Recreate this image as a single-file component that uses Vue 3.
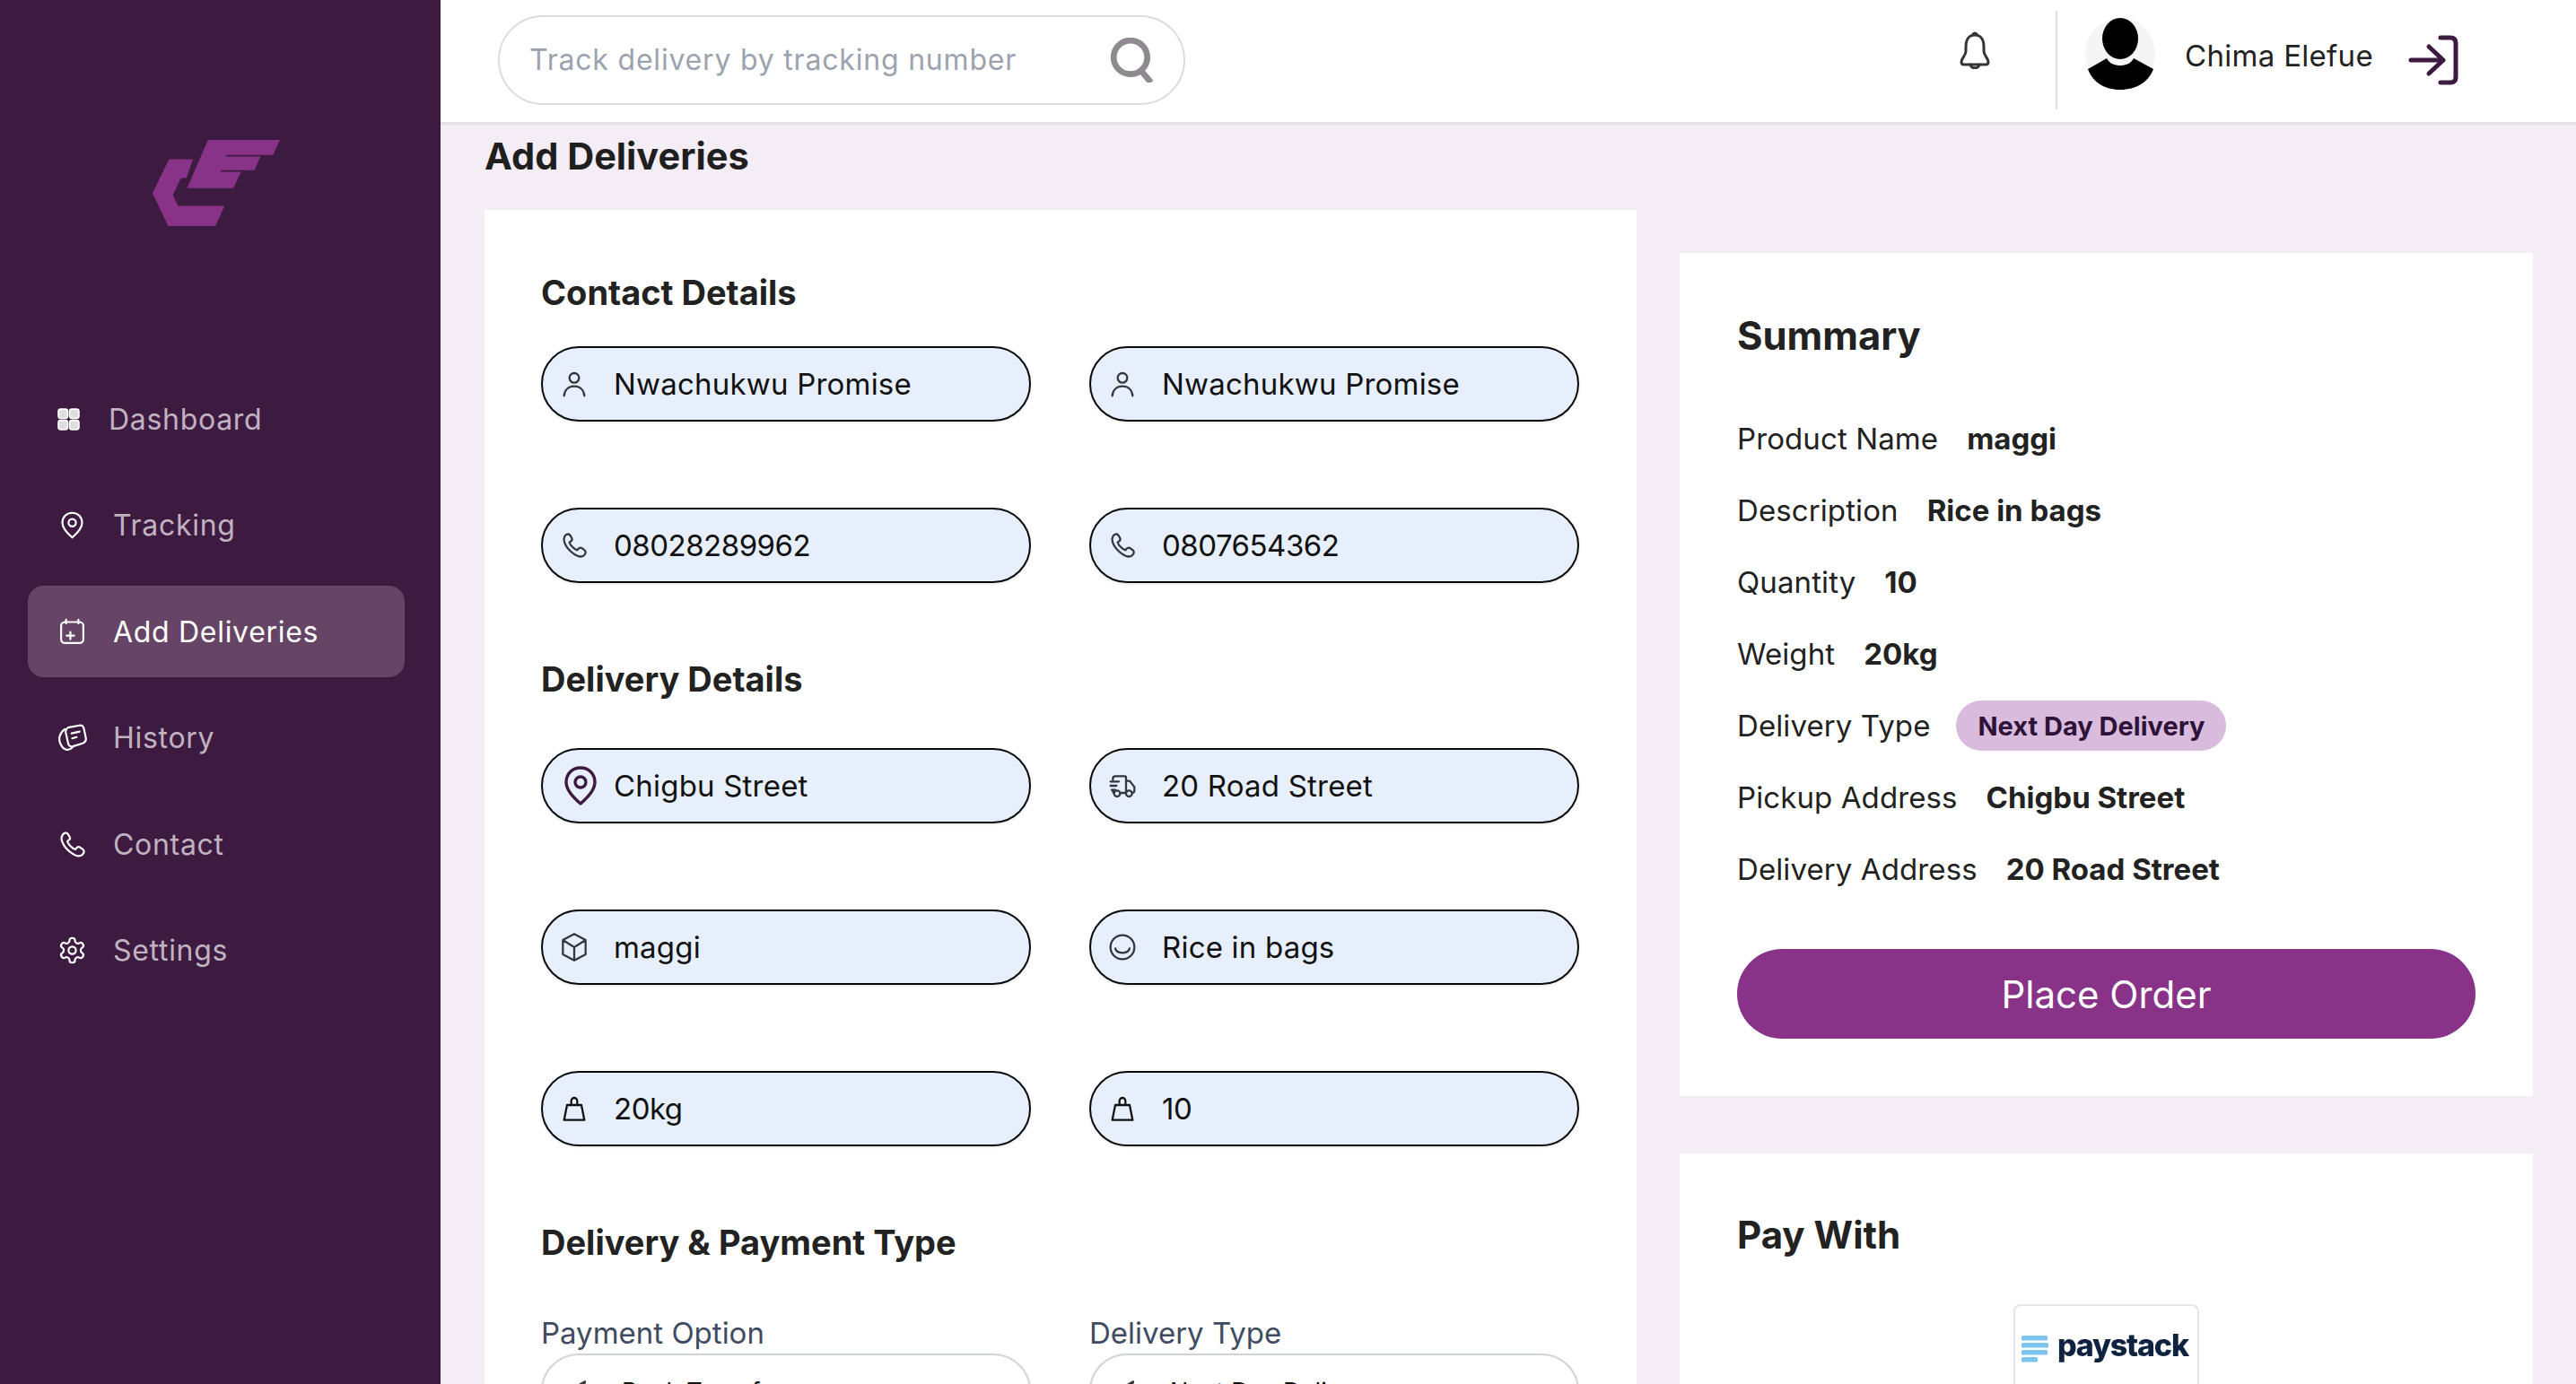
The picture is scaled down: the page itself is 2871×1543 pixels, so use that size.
<template>
  <div class="app">
    <aside class="sidebar">
      <svg class="logo" viewBox="90 78 425 287">
        <polygon points="275,78 515,78 492,128 338,128 332,133 450,133 430,179 320,179 316,184 385,184 360,239 205,239" />
        <polygon points="145,142 225,142 203,205 185,205 158,262 175,298 330,298 300,365 142,365 90,255" />
      </svg>
      <nav class="nav">
        <div v-for="item in nav" :key="item.label" class="nav-item" :class="{ active: item.active }">
          <svg v-if="item.icon === 'grid'" class="nav-icon dash" viewBox="0 0 24 24">
            <rect x="1" y="1" width="10" height="10" rx="2.5" />
            <rect x="13" y="1" width="10" height="10" rx="2.5" />
            <rect x="1" y="13" width="10" height="10" rx="2.5" />
            <rect x="13" y="13" width="10" height="10" rx="2.5" />
          </svg>
          <svg v-else class="nav-icon" viewBox="0 0 24 24"><path :d="icons[item.icon]" /></svg>
          <span>{{ item.label }}</span>
        </div>
      </nav>
    </aside>

    <div class="main">
      <header class="topbar">
        <div class="search">
          <span class="placeholder">Track delivery by tracking number</span>
          <svg class="search-icon" viewBox="0 0 48 48">
            <circle cx="22" cy="21" r="18" />
            <path d="M33 35l11 13" />
          </svg>
        </div>
        <svg class="bell" viewBox="0 0 34 42">
          <path d="M17 4c7 0 10 6 10 13v5c0 5 5 8 5 12 0 2-1 3-3 3H5c-2 0-3-1-3-3 0-4 5-7 5-12v-5C7 10 10 4 17 4z" />
          <path d="M15 3c1-1.500 3-1.500 4 0M12 37c1 5 9 5 10 0" />
        </svg>
        <div class="divider"></div>
        <svg class="avatar" viewBox="0 0 78 80">
          <ellipse cx="39" cy="40" rx="39" ry="40" fill="#f5f5f5" />
          <ellipse cx="39" cy="23" rx="20" ry="23" fill="#000" />
          <path d="M3 57L24 45c3 6 9 8 15 8s12-2 15-8l22 12c-5 14-19 23-37 23S8 71 3 57z" fill="#000" />
        </svg>
        <span class="user-name">Chima Elefue</span>
        <svg class="logout" viewBox="0 0 54 54">
          <path d="M2 27h36M22 12l16 15-16 15M35 2h11c4 0 6 2 6 6v38c0 4-2 6-6 6H35" />
        </svg>
      </header>

      <div class="content">
        <section class="left">
          <h1 class="page-title">Add Deliveries</h1>
          <div class="card form-card">
            <h2 class="section-title first">Contact Details</h2>
            <div class="field-grid">
              <div v-for="f in contact" :key="f.id" class="field">
                <span class="field-icon"><svg viewBox="0 0 24 24"><path :d="icons[f.icon]" /></svg></span>
                <span :class="{ digits: isNumeric(f.value) }">{{ f.value }}</span>
              </div>
            </div>

            <h2 class="section-title">Delivery Details</h2>
            <div class="field-grid">
              <div v-for="f in delivery" :key="f.id" class="field">
                <span class="field-icon" :class="f.icon"><svg viewBox="0 0 24 24"><path :d="icons[f.icon]" /></svg></span>
                <span :class="{ digits: isNumeric(f.value) }">{{ f.value }}</span>
              </div>
            </div>

            <h2 class="section-title">Delivery &amp; Payment Type</h2>
            <div class="select-grid">
              <div v-for="s in selects" :key="s.label">
                <div class="select-label">{{ s.label }}</div>
                <div class="select">
                  <span class="field-icon"><svg viewBox="0 0 24 24"><path :d="icons.send" /></svg></span>
                  <span>{{ s.value }}</span>
                </div>
              </div>
            </div>
          </div>
        </section>

        <section class="right">
          <div class="card summary">
            <h2 class="card-title">Summary</h2>
            <div class="rows">
              <div v-for="r in summary" :key="r.label" class="row">
                <span>{{ r.label }}</span>
                <span v-if="r.badge" class="badge">{{ r.value }}</span>
                <strong v-else>{{ r.value }}</strong>
              </div>
            </div>
            <button class="place-order">Place Order</button>
          </div>

          <div class="card pay">
            <h2 class="card-title">Pay With</h2>
            <div class="pay-box">
              <svg class="pay-bars" viewBox="0 0 30 30">
                <rect x="0" y="0" width="29" height="5.5" rx="1.5" />
                <rect x="0" y="8" width="30" height="5.5" rx="1.5" />
                <rect x="0" y="16" width="29" height="5.5" rx="1.5" />
                <rect x="0" y="24" width="18" height="5.5" rx="1.5" />
              </svg>
              <span class="pay-name">paystack</span>
            </div>
          </div>
        </section>
      </div>
    </div>
  </div>
</template>

<script setup>
const icons = {
  pin: 'M12 2C7.2 2 4 5.6 4 10c0 4.6 4 8.6 8 12 4-3.4 8-7.4 8-12 0-4.4-3.2-8-8-8zM12 7a3 3 0 1 1 0 6 3 3 0 0 1 0-6z',
  calendar: 'M7 2v3M17 2v3M6 4h12a3 3 0 0 1 3 3v11a3 3 0 0 1-3 3H6a3 3 0 0 1-3-3V7a3 3 0 0 1 3-3zM10.5 12v6M7.5 15h6',
  history: 'M9.5 3.5L18 2a3 3 0 0 1 3.4 2.4L23 12a4 4 0 0 1-2.6 4.5L12.5 19a3 3 0 0 1-3.7-2L6.8 8a4 4 0 0 1 2.7-4.5zM6 5C2 8 0 13 3 18c2 4 6 5 9 2M11.5 8.5l6.5-1.5M12 12.5l3.5-1',
  phone: 'M4 4.5C5 2.5 7.5 2 8.5 3.5L10 6c.5 1 0 2-1 2.7l-1 .8c.5 2 4 6 6.5 6.5l1-1.2c.7-.8 1.8-1.1 2.7-.5l2.5 1.7c1.3 1 1.1 3-.7 4.5-2 1.5-5 1-8.5-1.5-3.5-2.5-6.5-6-7.7-9.5C3 7.5 3.2 6 4 4.5z',
  gear: 'M12.22 2h-.44a2 2 0 0 0-2 2v.18a2 2 0 0 1-1 1.73l-.43.25a2 2 0 0 1-2 0l-.15-.08a2 2 0 0 0-2.73.73l-.22.38a2 2 0 0 0 .73 2.73l.15.1a2 2 0 0 1 1 1.72v.51a2 2 0 0 1-1 1.74l-.15.09a2 2 0 0 0-.73 2.73l.22.38a2 2 0 0 0 2.73.73l.15-.08a2 2 0 0 1 2 0l.43.25a2 2 0 0 1 1 1.73V20a2 2 0 0 0 2 2h.44a2 2 0 0 0 2-2v-.18a2 2 0 0 1 1-1.73l.43-.25a2 2 0 0 1 2 0l.15.08a2 2 0 0 0 2.73-.73l.22-.39a2 2 0 0 0-.73-2.73l-.15-.08a2 2 0 0 1-1-1.74v-.5a2 2 0 0 1 1-1.74l.15-.09a2 2 0 0 0 .73-2.73l-.22-.38a2 2 0 0 0-2.73-.73l-.15.08a2 2 0 0 1-2 0l-.43-.25a2 2 0 0 1-1-1.73V4a2 2 0 0 0-2-2zM12 9a3 3 0 1 1 0 6 3 3 0 0 1 0-6z',
  user: 'M12 3a4 4 0 1 1 0 8 4 4 0 0 1 0-8zM3.5 22c.4-5 3.8-8 8.500-8s8.100 3 8.500 8',
  truck: 'M4 7V6a2 2 0 0 1 2-2h8a1 1 0 0 1 1 1v13H10M15 8h3l4 5v3a2 2 0 0 1-2 2M2 8.500h7M2 12h5M3 15.500h3M4 16v1a1 1 0 0 0 1 1M7.500 16a2.500 2.500 0 1 1 0 5 2.500 2.500 0 0 1 0-5zM17.500 16a2.500 2.500 0 1 1 0 5 2.500 2.500 0 0 1 0-5z',
  box: 'M12 1l9.500 5v12L12 23l-9.500-5V6zM2.500 6L12 12l9.500-6M12 12v11',
  smile: 'M12 2a10 10 0 1 1 0 20 10 10 0 0 1 0-20zM6 13c1 5 11 5 12 0',
  weight: 'M6 9h12l2.500 12.500h-17zM9.500 9V5.500a2.500 2.500 0 0 1 5 0V9',
  send: 'M3 14L21 4l-5 17-4-7z'
}

const nav = [
  { label: 'Dashboard', icon: 'grid' },
  { label: 'Tracking', icon: 'pin' },
  { label: 'Add Deliveries', icon: 'calendar', active: true },
  { label: 'History', icon: 'history' },
  { label: 'Contact', icon: 'phone' },
  { label: 'Settings', icon: 'gear' }
]

const contact = [
  { id: 1, icon: 'user', value: 'Nwachukwu Promise' },
  { id: 2, icon: 'user', value: 'Nwachukwu Promise' },
  { id: 3, icon: 'phone', value: '08028289962' },
  { id: 4, icon: 'phone', value: '0807654362' }
]

const delivery = [
  { id: 1, icon: 'pin', value: 'Chigbu Street' },
  { id: 2, icon: 'truck', value: '20 Road Street' },
  { id: 3, icon: 'box', value: 'maggi' },
  { id: 4, icon: 'smile', value: 'Rice in bags' },
  { id: 5, icon: 'weight', value: '20kg' },
  { id: 6, icon: 'weight', value: '10' }
]

const selects = [
  { label: 'Payment Option', value: 'Bank Transfer' },
  { label: 'Delivery Type', value: 'Next Day Delivery' }
]

const summary = [
  { label: 'Product Name', value: 'maggi' },
  { label: 'Description', value: 'Rice in bags' },
  { label: 'Quantity', value: '10' },
  { label: 'Weight', value: '20kg' },
  { label: 'Delivery Type', value: 'Next Day Delivery', badge: true },
  { label: 'Pickup Address', value: 'Chigbu Street' },
  { label: 'Delivery Address', value: '20 Road Street' }
]

const isNumeric = (value) => /^\d+(kg)?$/.test(value)
</script>

<style>
html, body {
  margin: 0;
  overflow: hidden;
}
</style>

<style scoped>
* {
  box-sizing: border-box;
}

.app {
  display: flex;
  height: 1543px;
  overflow: hidden;
  font-family: Inter, "Liberation Sans", sans-serif;
  font-size: 32px;
  color: #1f1f1f;
}

/* Sidebar */
.sidebar {
  width: 491px;
  flex-shrink: 0;
  background: #3d1a40;
  padding: 156px 40px 0 31px;
}

.logo {
  display: block;
  width: 142px;
  height: 96px;
  margin: 0 0 164px 139px;
  fill: #883388;
}

.nav {
  display: flex;
  flex-direction: column;
  gap: 16.5px;
}

.nav-item {
  display: flex;
  align-items: center;
  gap: 29px;
  height: 102px;
  padding-left: 33px;
  border-radius: 18px;
  color: #c0b2c1;
  font-size: 32px;
  letter-spacing: 0.7px;
}

.nav-item.active {
  background: #664466;
  color: #fff;
}

.nav-icon {
  width: 33px;
  height: 33px;
  flex-shrink: 0;
  fill: none;
  stroke: #fff;
  stroke-width: 1.6;
  stroke-linecap: round;
  stroke-linejoin: round;
}

.nav-icon.dash {
  width: 25px;
  height: 25px;
  margin-right: 3px;
  fill: #dedede;
  stroke-width: 1.6;
}

/* Top bar */
.main {
  flex: 1;
  min-width: 0;
  display: flex;
  flex-direction: column;
}

.topbar {
  display: flex;
  align-items: center;
  height: 139px;
  flex-shrink: 0;
  padding: 0 0 3px 64px;
  background: #fff;
  border-bottom: 3px solid #e3e3e3;
}

.search {
  display: flex;
  align-items: center;
  justify-content: space-between;
  width: 766px;
  height: 100px;
  padding: 0 32px 0 33px;
  border: 2px solid #dcdcdc;
  border-radius: 50px;
}

.placeholder {
  color: #9ca3af;
  font-size: 32px;
  letter-spacing: 0.8px;
}

.search-icon {
  width: 50px;
  height: 50px;
  fill: none;
  stroke: #8e8a90;
  stroke-width: 6.5;
}

.bell {
  width: 34px;
  height: 42px;
  margin: 0 0 21px 863px;
  fill: none;
  stroke: #333338;
  stroke-width: 3;
  stroke-linejoin: round;
  stroke-linecap: round;
}

.divider {
  width: 2px;
  height: 110px;
  margin-left: 73px;
  background: #e0e0e0;
}

.avatar {
  width: 78px;
  height: 80px;
  margin: 0 0 14px 31px;
}

.user-name {
  margin: 0 0 10px 33px;
  width: 250px;
  flex-shrink: 0;
  font-size: 33px;
  letter-spacing: 0.3px;
  color: #222;
}

.logout {
  width: 54px;
  height: 54px;
  flex-shrink: 0;
  overflow: visible;
  fill: none;
  stroke: #3d1a40;
  stroke-width: 5;
  stroke-linecap: round;
  stroke-linejoin: round;
}

/* Content */
.content {
  flex: 1;
  display: flex;
  gap: 48px;
  padding: 0 48px 0 49px;
  background: #f4edf5;
  overflow: hidden;
}

.left {
  width: 1284px;
  flex-shrink: 0;
}

.page-title {
  margin: 10px 0 35px;
  font-size: 41.5px;
  line-height: 50px;
  font-weight: 700;
  color: #1f1f1f;
}

.card {
  background: #fff;
}

.form-card {
  padding: 67px 64px 40px 63px;
}

.section-title {
  margin: 82px 0 52px;
  font-size: 38px;
  line-height: 50px;
  font-weight: 700;
  color: #222;
}

.section-title.first {
  margin: 0 0 35px;
}

.field-grid {
  display: grid;
  grid-template-columns: 546px 546px;
  column-gap: 65px;
  row-gap: 96px;
}

.field,
.select {
  display: flex;
  align-items: center;
  height: 84px;
  padding-left: 17px;
  border: 2px solid #0a0a0a;
  border-radius: 42px;
  background: #e7effc;
  box-shadow: 0 1px 3px rgba(0, 0, 0, 0.12);
  color: #111;
  font-size: 33px;
  letter-spacing: 0.2px;
}

.digits {
  letter-spacing: -0.5px;
}

.field-icon {
  display: flex;
  justify-content: center;
  width: 36px;
  margin-right: 26px;
  flex-shrink: 0;
}

.field-icon svg {
  width: 32px;
  height: 32px;
  fill: none;
  stroke: #33363f;
  stroke-width: 1.7;
  stroke-linecap: round;
  stroke-linejoin: round;
}

.field-icon.pin svg {
  flex-shrink: 0;
  width: 48px;
  height: 48px;
  margin-left: 14px;
  stroke: #3d1a40;
  stroke-width: 1.7;
}

.field-icon.weight svg {
  stroke: #111;
}

.select-grid {
  display: grid;
  grid-template-columns: 546px 546px;
  column-gap: 65px;
  margin-top: 56px;
}

.select-label {
  height: 40px;
  margin-bottom: 3px;
  line-height: 40px;
  color: #3f4b60;
  font-size: 33px;
}

.select {
  border-color: #d1d5db;
  background: #fff;
  font-size: 27px;
}

.select .field-icon {
  margin-right: 35px;
}

/* Right column */
.right {
  width: 951px;
  flex-shrink: 0;
  margin-top: 143px;
  display: flex;
  flex-direction: column;
  gap: 64px;
}

.summary {
  height: 940px;
  padding: 67px 64px 64px;
}

.card-title {
  margin: 0;
  font-size: 42px;
  line-height: 50px;
  font-weight: 700;
  color: #222;
}

.summary .card-title {
  font-size: 43.5px;
}

.rows {
  margin: 50px 0 49px;
}

.row {
  display: flex;
  align-items: center;
  gap: 32px;
  height: 80px;
  color: #222;
  font-size: 33px;
  letter-spacing: 0.1px;
}

.row strong {
  font-weight: 700;
  letter-spacing: 0;
}

.badge {
  display: flex;
  align-items: center;
  height: 56px;
  margin-left: -3px;
  padding: 0 24px;
  border-radius: 28px;
  background: #d8bbdd;
  color: #2f1237;
  font-size: 29px;
  font-weight: 700;
  letter-spacing: 0;
}

.place-order {
  display: block;
  width: 823px;
  height: 100px;
  border: none;
  border-radius: 50px;
  background: #883388;
  color: #fff;
  font-family: inherit;
  font-size: 42px;
}

.pay {
  flex: 1;
  padding: 66px 64px 0;
}

.pay-box {
  display: flex;
  align-items: flex-start;
  gap: 10px;
  width: 207px;
  height: 140px;
  margin: 52px auto 0;
  padding: 33px 0 0 7px;
  border: 2px solid #e5e5e5;
  border-radius: 8px;
}

.pay-bars {
  width: 30px;
  height: 30px;
  flex-shrink: 0;
  fill: #7cc3ee;
  filter: blur(0.5px);
}

.pay-name {
  margin-top: -6px;
  font-size: 34px;
  line-height: 34px;
  font-weight: 800;
  letter-spacing: -1.2px;
  color: #0f2340;
  filter: blur(0.5px);
}
</style>
